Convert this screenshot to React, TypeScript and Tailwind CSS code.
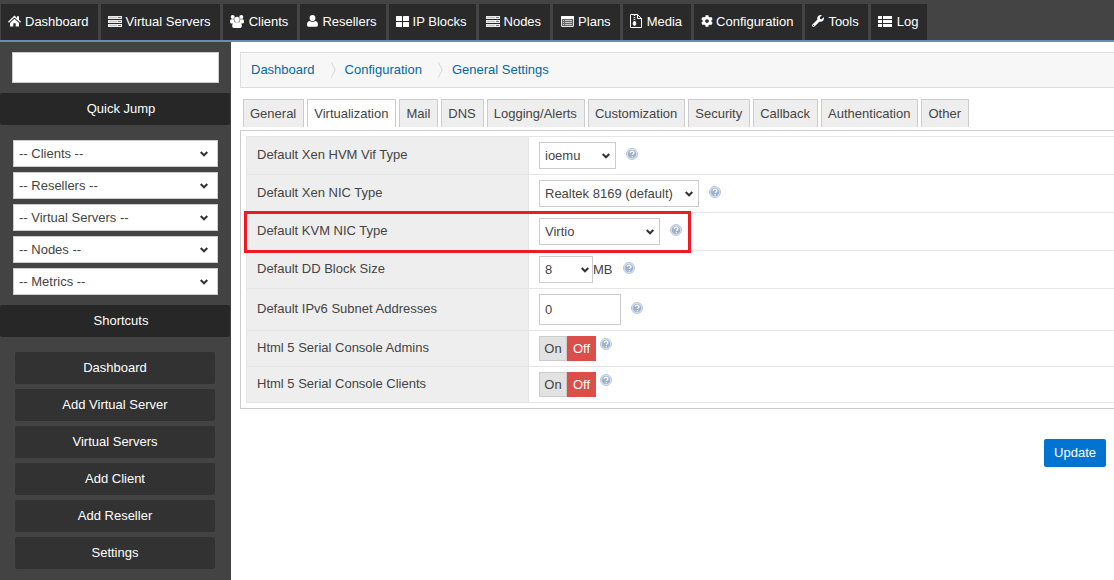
import { useState } from 'react';
import type { ReactNode } from 'react';
import { FaCog, FaWrench } from 'react-icons/fa';

const HomeIcon = () => (
    <svg viewBox="0 0 13 12" className="w-[13px] h-3" fill="currentColor">
        <path d="M6.500 .5L9 2.900V1.200h2v3.600l2 1.900-.9 1L6.500 2.500.900 7.700 0 6.700z" />
        <path d="M6.500 3.700L11 7.900V11.500H7.700V8.300H5.300v3.200H2V7.900z" />
    </svg>
);

const ServerIcon = () => (
    <svg viewBox="0 0 14 11" className="w-3.5 h-[11px]" fill="none">
        {[0, 4, 8].map((y) => (
            <g key={y}>
                <rect x="0" y={y} width="14" height="3" fill="#ececec" />
                <rect x="1" y={y + 1} width="8" height="1" fill="#c4c4c4" />
                <rect x="10" y={y + 1} width="3" height="1" fill="#777" />
            </g>
        ))}
    </svg>
);

const GroupIcon = () => (
    <svg viewBox="0 0 14 13" className="w-3.5 h-[13px]" fill="currentColor">
        <circle cx="2.700" cy="2" r="2" />
        <circle cx="11.300" cy="2" r="2" />
        <circle cx="7" cy="4.500" r="2.700" />
        <path d="M0 6.500C0 5 .7 4.200 1.700 4.200h2.100c.1 1.400.5 2.200 1.200 3L3.500 8.500H1.300C.5 8.500 0 7.800 0 6.500zM14 6.500c0-1.500-.7-2.300-1.700-2.300h-2.100c-.1 1.400-.5 2.200-1.200 3l1.500 1.300h2.200c.8 0 1.300-.7 1.300-2z" />
        <path d="M2.200 11c0-2.300.9-3.700 2.500-3.700h4.600c1.600 0 2.500 1.400 2.500 3.700 0 1.200-.7 2-1.800 2H4c-1.100 0-1.800-.8-1.800-2z" />
    </svg>
);

const UserIcon = () => (
    <svg viewBox="0 0 11 12" className="w-[11px] h-3" fill="currentColor">
        <ellipse cx="5.500" cy="3.100" rx="2.900" ry="3.100" />
        <path d="M0 9.500C0 7.300 1.200 6 2.900 6c.7.700 1.600 1 2.600 1s1.900-.3 2.600-1C9.800 6 11 7.300 11 9.500c0 1.600-.7 2.300-1.800 2.300H1.800C.7 11.800 0 11.100 0 9.500z" />
    </svg>
);

const BlocksIcon = () => (
    <svg viewBox="0 0 13 11" className="w-[13px] h-[11px]" fill="currentColor">
        <rect width="6" height="5" rx=".5" />
        <rect x="7" width="6" height="5" rx=".5" />
        <rect y="6" width="6" height="5" rx=".5" />
        <rect x="7" y="6" width="6" height="5" rx=".5" />
    </svg>
);

const ListIcon = () => (
    <svg viewBox="0 0 14 11" className="w-3.5 h-[11px]" fill="currentColor">
        {[0, 4, 8].map((y) => (
            <g key={y}>
                <rect y={y} width="4" height="3" />
                <rect x="5" y={y} width="9" height="3" />
            </g>
        ))}
    </svg>
);

const PlanIcon = () => (
    <svg viewBox="0 0 13 11" className="w-[13px] h-[11px]">
        <rect x=".5" y=".5" width="12" height="10" rx=".5" fill="#666" stroke="#e4e4e4" />
        <rect width="13" height="3" rx=".5" fill="#fff" />
        <path d="M2 4.500h1M4 4.500h7M2 6.500h1M4 6.500h7M2 8.500h1M4 8.500h7" stroke="#c8c8c8" />
    </svg>
);

const MediaIcon = () => (
    <svg viewBox="0 0 12 14" className="w-3 h-3.5" fill="none" stroke="#fff">
        <path d="M.5 .5h7l4 4v9H.5zM7.500 .5v4h4" />
        <path d="M4.500 1v7" strokeWidth="1.500" strokeDasharray="1 1" />
        <ellipse cx="4.500" cy="9.500" rx="1.300" ry="2" fill="#fff" />
    </svg>
);

const navItems = [
    { icon: <HomeIcon />, label: 'Dashboard', iconWidth: 'w-[15px]' },
    { icon: <ServerIcon />, label: 'Virtual Servers', iconWidth: 'w-4' },
    { icon: <GroupIcon />, label: 'Clients', iconWidth: 'w-[17px]' },
    { icon: <UserIcon />, label: 'Resellers', iconWidth: 'w-[13px]' },
    { icon: <BlocksIcon />, label: 'IP Blocks', iconWidth: 'w-[15px]' },
    { icon: <ServerIcon />, label: 'Nodes', iconWidth: 'w-4' },
    { icon: <PlanIcon />, label: 'Plans', iconWidth: 'w-4' },
    { icon: <MediaIcon />, label: 'Media', iconWidth: 'w-[15px]' },
    { icon: <FaCog size={12} />, label: 'Configuration', iconWidth: 'w-[13px]' },
    { icon: <FaWrench size={12} />, label: 'Tools', iconWidth: 'w-3.5' },
    { icon: <ListIcon />, label: 'Log', iconWidth: 'w-[17px]' },
];

const quickJumps = ['Clients', 'Resellers', 'Virtual Servers', 'Nodes', 'Metrics'];

const shortcuts = ['Dashboard', 'Add Virtual Server', 'Virtual Servers', 'Add Client', 'Add Reseller', 'Settings'];

const crumbs = ['Dashboard', 'Configuration', 'General Settings'];

const tabs = [
    'General',
    'Virtualization',
    'Mail',
    'DNS',
    'Logging/Alerts',
    'Customization',
    'Security',
    'Callback',
    'Authentication',
    'Other',
];

function Select({ id, label, option, width, arrow = 'right-1.5' }: {
    id?: string;
    label?: string;
    option: string;
    width: string;
    arrow?: string;
}) {
    return (
        <div className={`relative ${width}`}>
            <select
                id={id}
                aria-label={label}
                className="block appearance-none w-full h-[27px] pl-[5px] bg-white border border-[#ccc] text-[#444]"
            >
                <option>{option}</option>
            </select>
            <svg
                viewBox="0 0 8 6"
                className={`absolute top-[11px] ${arrow} w-2 h-1.5 pointer-events-none`}
                fill="none"
                stroke="#333"
                strokeWidth="2"
            >
                <path d="M.7 1L4 4.300 7.300 1" />
            </svg>
        </div>
    );
}

function TopNav() {
    return (
        <nav className="flex gap-[3px] bg-[#444] pt-1 pl-px border-b-2 border-[#688bbb]">
            {navItems.map((item) => (
                <a
                    key={item.label}
                    href="#"
                    className="flex items-center h-9 pl-1.5 pr-[9px] bg-[#2a2a2a] text-white whitespace-nowrap"
                >
                    <span className={`flex justify-center mr-[3px] mb-0.5 ${item.iconWidth}`}>{item.icon}</span>
                    <span>{item.label}</span>
                </a>
            ))}
        </nav>
    );
}

function SidebarHeading({ children }: { children: ReactNode }) {
    return <h2 className="h-8 mr-px pl-3 leading-8 text-center text-white bg-[#272727] rounded-xs">{children}</h2>;
}

function Sidebar() {
    return (
        <aside className="w-[231px] shrink-0 bg-[#434343] pt-2.5">
            <div className="px-3">
                <input
                    type="text"
                    aria-label="Search"
                    className="block w-full h-[31px] px-1.5 bg-white border border-[#ccc] text-[#444]"
                />
            </div>
            <div className="mt-2.5">
                <SidebarHeading>Quick Jump</SidebarHeading>
            </div>
            <div className="flex flex-col gap-[5px] px-[13px] pt-[15px] pb-2.5">
                {quickJumps.map((name) => (
                    <Select key={name} label={name} option={`-- ${name} --`} width="w-full" arrow="right-2.5" />
                ))}
            </div>
            <SidebarHeading>Shortcuts</SidebarHeading>
            <div className="flex flex-col gap-[5px] pl-[15px] pr-4 pt-[15px] pb-[11px]">
                {shortcuts.map((name) => (
                    <a key={name} href="#" className="h-8 leading-8 text-center text-white bg-[#323232] rounded-xs">
                        {name}
                    </a>
                ))}
            </div>
        </aside>
    );
}

function HelpIcon() {
    return (
        <svg viewBox="0 0 12 12" className="w-3 h-3 shrink-0">
            <circle cx="6" cy="6" r="5.500" fill="#e3eaf4" stroke="#b9c6da" />
            <circle cx="6" cy="6" r="4.300" fill="#9db2d3" />
            <path
                d="M4.300 4.900c0-1.100.8-1.700 1.800-1.700s1.800.6 1.800 1.500c0 1.200-1.600 1.200-1.600 2.300M6.300 8v1.200"
                fill="none"
                stroke="#fff"
                strokeWidth="1.300"
            />
        </svg>
    );
}

function Row({ id, label, highlight, children }: { id: string; label: string; highlight?: boolean; children: ReactNode }) {
    return (
        <tr className="border-y border-[#e5e5e5]">
            <th className="relative w-[282px] pl-2.5 text-left font-normal bg-[#eee] border-x border-[#e5e5e5]">
                {highlight && (
                    <span className="absolute z-10 -left-[3px] -top-0.5 w-[447px] h-[42px] border-3 border-[#ed1c24] pointer-events-none" />
                )}
                <label htmlFor={id} className="block pb-0.5">
                    {label}
                </label>
            </th>
            <td className="py-[5px] pl-2.5">
                <div className="flex items-center">{children}</div>
            </td>
        </tr>
    );
}

function Field({ children }: { children: ReactNode }) {
    return (
        <>
            {children}
            <span className="ml-2.5 mb-[3px]">
                <HelpIcon />
            </span>
        </>
    );
}

function Toggle({ id }: { id: string }) {
    const [on, setOn] = useState(false);

    return (
        <div className="flex items-start">
            <button
                id={id}
                type="button"
                aria-pressed={on}
                onClick={() => setOn(true)}
                className={`w-7 h-[25px] border ${on ? 'bg-[#5bb75b] border-[#5bb75b] text-white' : 'bg-[#e2e2e2] border-[#ccc]'}`}
            >
                On
            </button>
            <button
                type="button"
                aria-pressed={!on}
                onClick={() => setOn(false)}
                className={`w-[29px] h-[25px] border ${on ? 'bg-[#e2e2e2] border-[#ccc]' : 'bg-[#da4f4a] border-[#da4f4a] text-white'}`}
            >
                Off
            </button>
            <span className="ml-1 mt-0.5">
                <HelpIcon />
            </span>
        </div>
    );
}

function SettingsTable() {
    return (
        <table className="w-full border-collapse">
            <tbody>
                <Row id="vif" label="Default Xen HVM Vif Type">
                    <Field>
                        <Select id="vif" option="ioemu" width="w-[77px]" />
                    </Field>
                </Row>
                <Row id="xen-nic" label="Default Xen NIC Type">
                    <Field>
                        <Select id="xen-nic" option="Realtek 8169 (default)" width="w-40" />
                    </Field>
                </Row>
                <Row id="kvm-nic" label="Default KVM NIC Type" highlight>
                    <Field>
                        <Select id="kvm-nic" option="Virtio" width="w-[121px]" />
                    </Field>
                </Row>
                <Row id="dd-size" label="Default DD Block Size">
                    <Field>
                        <Select id="dd-size" option="8" width="w-[54px]" arrow="right-1" />
                        <span>MB</span>
                    </Field>
                </Row>
                <Row id="ipv6" label="Default IPv6 Subnet Addresses">
                    <Field>
                        <input
                            id="ipv6"
                            type="text"
                            defaultValue="0"
                            className="w-[82px] h-[31px] px-[5px] bg-white border border-[#ccc]"
                        />
                    </Field>
                </Row>
                <Row id="console-admins" label="Html 5 Serial Console Admins">
                    <Toggle id="console-admins" />
                </Row>
                <Row id="console-clients" label="Html 5 Serial Console Clients">
                    <Toggle id="console-clients" />
                </Row>
            </tbody>
        </table>
    );
}

export default function App() {
    const [activeTab, setActiveTab] = useState('Virtualization');

    return (
        <div className="flex flex-col min-h-screen bg-white text-[#444] text-[13px] leading-5 font-['Liberation_Sans',Arial,sans-serif]">
            <TopNav />
            <div className="flex flex-1">
                <Sidebar />
                <main className="flex-1 min-w-0 pl-[9px] pt-2.5">
                    {/* Breadcrumbs */}
                    <nav className="flex items-center h-9 pl-2.5 bg-[#f7f7f7] border border-r-0 border-[#ddd]">
                        {crumbs.map((crumb, i) => (
                            <div key={crumb} className="flex items-center">
                                {i > 0 && (
                                    <svg viewBox="0 0 5 16" className="w-[5px] h-4 ml-4 mr-[9px]" fill="none" stroke="#d5d5d5">
                                        <path d="M.5 .5C1.500 4 4 6 4 8S1.500 12 .5 15.500" />
                                    </svg>
                                )}
                                <a href="#" className="text-[#0069a6]">
                                    {crumb}
                                </a>
                            </div>
                        ))}
                    </nav>

                    {/* Tabs */}
                    <div role="tablist" className="flex gap-[3px] h-[31px] mt-[11px] pl-[3px]">
                        {tabs.map((tab) => (
                            <button
                                key={tab}
                                type="button"
                                role="tab"
                                aria-selected={tab === activeTab}
                                onClick={() => setActiveTab(tab)}
                                className={`h-7 pl-1.5 pr-[7px] border border-b-0 border-[#ccc] whitespace-nowrap ${tab === activeTab ? 'bg-white' : 'bg-[#eee]'}`}
                            >
                                {tab}
                            </button>
                        ))}
                    </div>

                    <div className="p-[5px] pr-0 border border-r-0 border-[#ccc]">
                        <SettingsTable />
                    </div>

                    <div className="flex justify-end mt-[30px] pr-2">
                        <button type="button" className="h-7 px-2.5 bg-[#0074d0] text-white rounded-xs">
                            Update
                        </button>
                    </div>
                </main>
            </div>
        </div>
    );
}
